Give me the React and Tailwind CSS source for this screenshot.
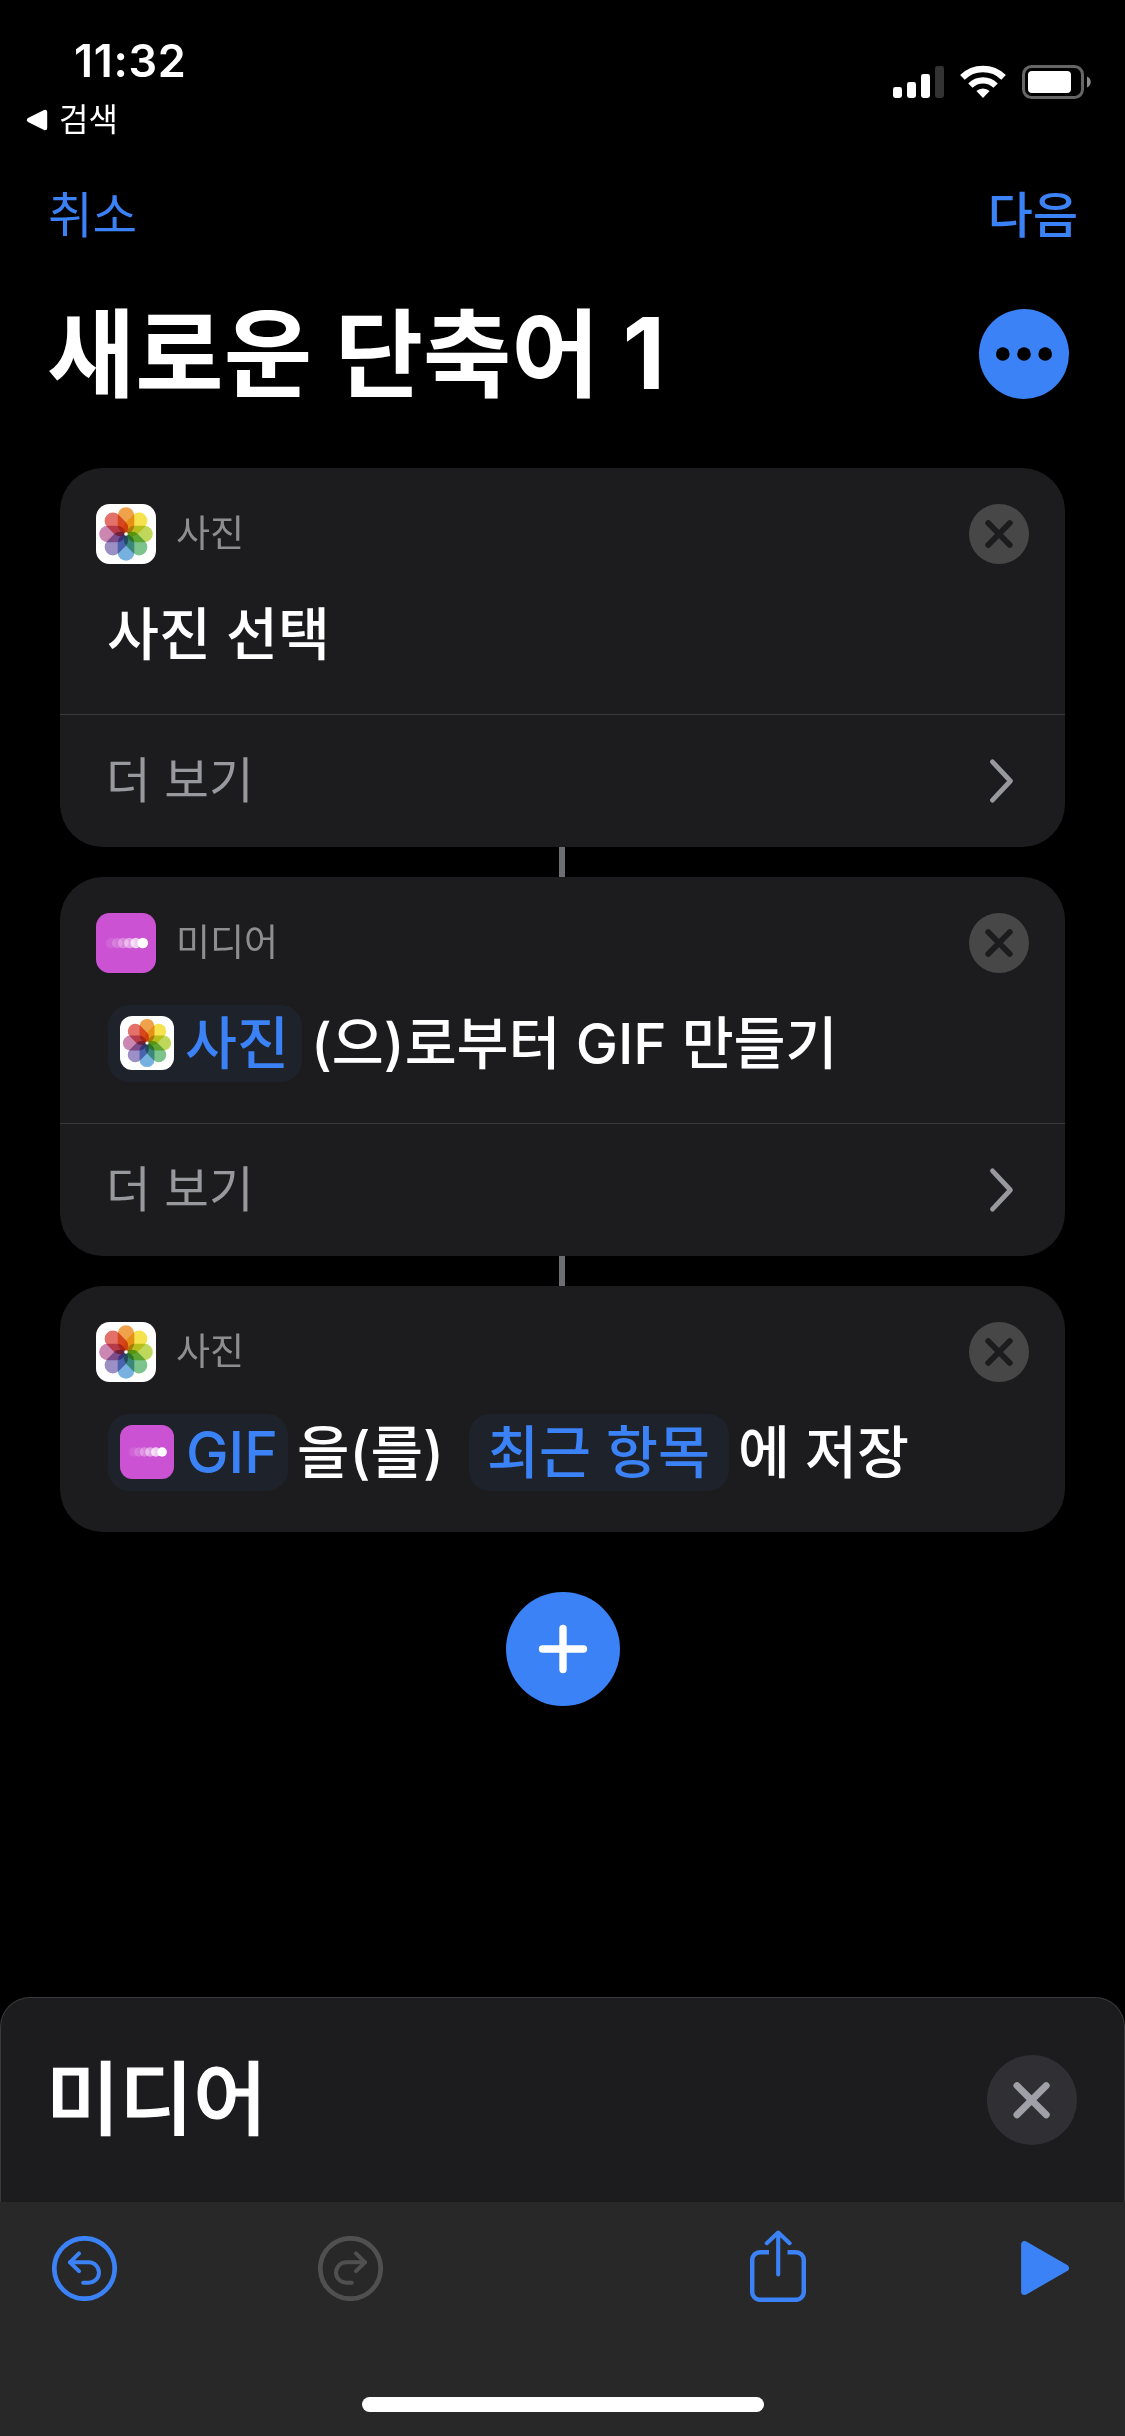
import React from "react";

const petals = [
  { color: "#f0a24a", angle: 0 },
  { color: "#f6e24c", angle: 45 },
  { color: "#bfd85c", angle: 90 },
  { color: "#7cc48c", angle: 135 },
  { color: "#77b1e0", angle: 180 },
  { color: "#9c8fc6", angle: 225 },
  { color: "#cb86b2", angle: 270 },
  { color: "#e4706a", angle: 315 },
];

const trail = [
  { cx: 15.2, opacity: 0.1 },
  { cx: 21.2, opacity: 0.18 },
  { cx: 27.2, opacity: 0.3 },
  { cx: 33.4, opacity: 0.45 },
  { cx: 39.8, opacity: 0.7 },
  { cx: 46.8, opacity: 1 },
];

const PhotosIcon = ({ className }) => (
  <svg viewBox="0 0 60 60" className={className}>
    <rect width="60" height="60" rx="13.5" fill="#fff" />
    <g className="isolate">
      {petals.map((p) => (
        <rect
          key={p.angle}
          x="21.7"
          y="3.2"
          width="16.6"
          height="26.4"
          rx="8.3"
          fill={p.color}
          transform={`rotate(${p.angle} 30 30)`}
          className="mix-blend-multiply"
        />
      ))}
    </g>
    <circle cx="30" cy="30" r="1.8" fill="#fff" />
  </svg>
);

const MediaIcon = ({ className }) => (
  <svg viewBox="0 0 60 60" className={className}>
    <rect width="60" height="60" rx="13.5" fill="#cb52d2" />
    {trail.map((dot) => (
      <circle key={dot.cx} cx={dot.cx} cy="30" r="5.3" fill="#fff" opacity={dot.opacity} />
    ))}
  </svg>
);

const icons = { photos: PhotosIcon, media: MediaIcon };

const StatusIcons = () => (
  <svg viewBox="0 0 200 34" className="w-[200px] h-[34px]">
    <rect x="1" y="22" width="9" height="11" rx="2.4" fill="#fff" />
    <rect x="15" y="17" width="9" height="16" rx="2.4" fill="#fff" />
    <rect x="29" y="9" width="9" height="24" rx="2.4" fill="#fff" />
    <rect x="43" y="1" width="9" height="32" rx="2.4" fill="#333" />
    <g fill="none" stroke="#fff">
      <path d="M70.4 12.4a29.6 29.6 0 0 1 41.2 0" strokeWidth="6.6" />
      <path d="M78.4 20.6a18 18 0 0 1 25.2 0" strokeWidth="6.2" />
    </g>
    <path d="M91 33l-6.6-6.9a9.6 9.6 0 0 1 13.2 0z" fill="#fff" />
    <rect x="131.5" y="1.5" width="59" height="31" rx="8" fill="none" stroke="#666" strokeWidth="3" />
    <rect x="136" y="6" width="43" height="22" rx="4" fill="#fff" />
    <path d="M195 11.5c5 1.8 5 9.2 0 11z" fill="#8a8a8a" />
  </svg>
);

const RemoveButton = () => (
  <button className="size-[60px] rounded-full bg-[#474747]">
    <svg viewBox="0 0 60 60" className="size-[60px]">
      <path d="M19.2 19L40.8 41M40.8 19L19.2 41" stroke="#1c1c1e" strokeWidth="5.8" strokeLinecap="round" />
    </svg>
  </button>
);

const Token = ({ icon, className, children }) => {
  const Icon = icon && icons[icon];
  return (
    <span className={`flex h-[77px] items-center rounded-[21px] bg-[#1e222a] text-[#3b82f6] ${className}`}>
      {Icon && <Icon className="mr-[11px] mb-px size-[54px]" />}
      {children}
    </span>
  );
};

const ActionCard = ({ icon, app, more, children }) => {
  const Icon = icons[icon];
  return (
    <div className="w-[1005px] overflow-hidden rounded-[43px] bg-[#1c1c1e]">
      <div className="flex h-[60px] mt-9 pl-9 pr-9 items-center">
        <Icon className="size-[60px]" />
        <span className="ml-5 text-[37px] leading-[60px] text-[#8e8e8e]">{app}</span>
        <div className="ml-auto flex">
          <RemoveButton />
        </div>
      </div>
      <div className="mt-8 mb-[41px] flex h-[77px] items-center pl-12 text-[56.5px] leading-[77px] font-medium whitespace-pre text-white">
        {children}
      </div>
      {more && (
        <div className="flex h-[133px] items-center border-t border-[#38383a] pl-[46px] pr-[49px] text-[48.5px] text-[#98989f]">
          더 보기
          <svg viewBox="0 0 28 46" className="ml-auto h-[46px] w-[28px]">
            <path
              d="M4.5 3.8L22.4 23L4.5 42.2"
              fill="none"
              stroke="#98989f"
              strokeWidth="4.8"
              strokeLinecap="round"
              strokeLinejoin="round"
            />
          </svg>
        </div>
      )}
    </div>
  );
};

const Connector = () => <div className="h-[30px] w-[6px] -ml-px bg-[#6d6e74]" />;

const CircleArrow = ({ className, flipped }) => (
  <svg
    viewBox="0 0 65 65"
    fill="none"
    stroke="currentColor"
    strokeLinecap="round"
    strokeLinejoin="round"
    className={`size-[65px] ${className}`}
  >
    <circle cx="32.5" cy="32.5" r="30.2" strokeWidth="4.7" />
    <g strokeWidth="4" transform={flipped ? "translate(65 0) scale(-1 1)" : undefined}>
      <path d="M27 17.4L18 26.3L27 35.2" />
      <path d="M18 26.3H36.8a10.2 10.2 0 0 1 0 20.4H31.2" />
    </g>
  </svg>
);

const App = () => {
  return (
    <div className="flex h-[2436px] w-[1125px] flex-col overflow-hidden bg-black text-white font-['Inter','Noto_Sans_CJK_KR',sans-serif]">
      {/* status bar */}
      <div className="flex justify-between pr-[33px] pt-[34px]">
        <div>
          <div className="pl-[74px] text-[45px] leading-[54px] font-semibold tracking-[0.7px]">11:32</div>
          <div className="mt-3 flex items-center pl-[26px] text-[32px] leading-[40px]">
            <svg viewBox="0 0 22 22" className="mr-[11px] size-[22px]">
              <path d="M3 11L19 3V19Z" fill="#fff" stroke="#fff" strokeWidth="4.4" strokeLinejoin="round" />
            </svg>
            검색
          </div>
        </div>
        <div className="mt-[31px]">
          <StatusIcons />
        </div>
      </div>

      <div className="mt-[46px] flex justify-between pl-[48px] pr-[47px] leading-[60px] text-[#3b82f6]">
        <button className="text-[48.5px]">취소</button>
        <button className="text-[49px] font-medium">다음</button>
      </div>

      <div className="mt-12 flex items-center justify-between pl-[47px] pr-14">
        <h1 className="text-[96px] leading-[120px] font-bold">
          새로운 단축어 <span className="text-[99px] leading-none">1</span>
        </h1>
        <svg viewBox="0 0 90 90" className="size-[90px]">
          <circle cx="45" cy="45" r="45" fill="#3b82f6" />
          <circle cx="23.8" cy="45" r="6.8" />
          <circle cx="45" cy="45" r="6.8" />
          <circle cx="66.2" cy="45" r="6.8" />
        </svg>
      </div>

      <div className="mt-[54px] flex flex-col items-center">
        <ActionCard icon="photos" app="사진" more>
          <span className="-ml-px">사진 선택</span>
        </ActionCard>
        <Connector />
        <ActionCard icon="media" app="미디어" more>
          <Token icon="photos" className="w-[194px] pl-3">
            사진
          </Token>
          <span className="ml-[9px]">(으)로부터 GIF 만들기</span>
        </ActionCard>
        <Connector />
        <ActionCard icon="photos" app="사진">
          <Token icon="media" className="w-[180px] pl-3">
            <span className="ml-px text-[57px]">GIF</span>
          </Token>
          <span className="ml-[9px] text-[57px]">을(를)</span>
          <Token className="ml-[25px] w-[260px] pl-[18px]">최근 항목</Token>
          <span className="ml-[9px]">에 저장</span>
        </ActionCard>

        <svg viewBox="0 0 114 114" className="mt-[60px] size-[114px]">
          <circle cx="57" cy="57" r="57" fill="#3b82f6" />
          <path d="M57 36.5V77.5M36.5 57H77.5" stroke="#fff" strokeWidth="7.4" strokeLinecap="round" />
        </svg>
      </div>

      {/* bottom sheet */}
      <div className="mt-auto flex h-[205px] items-center justify-between rounded-t-[30px] border border-b-0 border-[#3a3a3c] bg-[#1c1c1e] pl-[45px] pr-[47px]">
        <h2 className="pb-[3px] text-[80px] leading-[90px] font-medium [-webkit-text-stroke:1.2px_white]">미디어</h2>
        <svg viewBox="0 0 90 90" className="size-[90px]">
          <circle cx="45" cy="45" r="45" fill="#302f34" />
          <path d="M30 30.6L59.2 59.8M59.2 30.6L30 59.8" stroke="#a0a0a8" strokeWidth="7" strokeLinecap="round" />
        </svg>
      </div>

      <div className="h-[234px] bg-[#282828]">
        <div className="flex h-[72px] mt-7 pl-[52px]">
          <CircleArrow className="mt-[6px] text-[#3b82f6]" />
          <CircleArrow flipped className="ml-[201px] mt-[6px] text-[#505050]" />
          <svg
            viewBox="0 0 56 72"
            fill="none"
            stroke="#3b82f6"
            strokeLinejoin="round"
            className="ml-[367px] h-[72px] w-[56px]"
          >
            <path
              d="M19 22.2H10a7.8 7.8 0 0 0-7.8 7.8V62a7.8 7.8 0 0 0 7.8 7.8H46a7.8 7.8 0 0 0 7.8-7.8V30a7.8 7.8 0 0 0-7.8-7.8H37.5"
              strokeWidth="4.5"
            />
            <path d="M28.2 44.5V2.6M16.8 13.2L28.2 2.6L39.6 13.2" strokeWidth="4.1" strokeLinecap="round" />
          </svg>
          <svg viewBox="0 0 48 54" className="ml-[215px] mt-[11px] h-[54px] w-[48px]">
            <path d="M3.6 3.6V50.4L44.4 27Z" fill="#3b82f6" stroke="#3b82f6" strokeWidth="7" strokeLinejoin="round" />
          </svg>
        </div>
        <div className="mx-auto mt-[95px] h-[15px] w-[402px] rounded-full bg-white" />
      </div>
    </div>
  );
};

export default App;
